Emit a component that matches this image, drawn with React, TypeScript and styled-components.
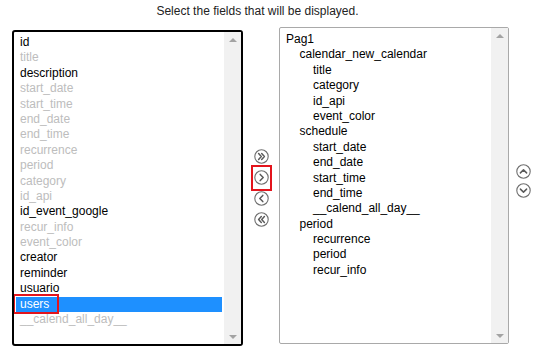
import React from "react";
import styled, { createGlobalStyle, css } from "styled-components";

const GlobalStyle = createGlobalStyle`
  html, body {
    margin: 0;
    padding: 0;
    background: #fff;
    font-family: "Liberation Sans", Arial, sans-serif;
    font-size: 12px;
  }
`;

type Field = { name: string; enabled: boolean; selected?: boolean; marked?: boolean };

const available: Field[] = [
  { name: "id", enabled: true },
  { name: "title", enabled: false },
  { name: "description", enabled: true },
  { name: "start_date", enabled: false },
  { name: "start_time", enabled: false },
  { name: "end_date", enabled: false },
  { name: "end_time", enabled: false },
  { name: "recurrence", enabled: false },
  { name: "period", enabled: false },
  { name: "category", enabled: false },
  { name: "id_api", enabled: false },
  { name: "id_event_google", enabled: true },
  { name: "recur_info", enabled: false },
  { name: "event_color", enabled: false },
  { name: "creator", enabled: true },
  { name: "reminder", enabled: true },
  { name: "usuario", enabled: true },
  { name: "users", enabled: true, selected: true, marked: true },
  { name: "__calend_all_day__", enabled: false },
];

const chosen: [string, number][] = [
  ["Pag1", 0],
  ["calendar_new_calendar", 1],
  ["title", 2],
  ["category", 2],
  ["id_api", 2],
  ["event_color", 2],
  ["schedule", 1],
  ["start_date", 2],
  ["end_date", 2],
  ["start_time", 2],
  ["end_time", 2],
  ["__calend_all_day__", 2],
  ["period", 1],
  ["recurrence", 2],
  ["period", 2],
  ["recur_info", 2],
];

const Page = styled.div`
  width: 546px;
  height: 346px;
  overflow: hidden;
`;

const Title = styled.div`
  height: 27px;
  box-sizing: border-box;
  padding: 4px 31px 0 0;
  line-height: 14px;
  text-align: center;
  color: #222;
`;

const Row = styled.div`
  display: flex;
  align-items: flex-start;
  padding-left: 12px;
`;

const ListBox = styled.div<{ $strong?: boolean }>`
  display: flex;
  box-sizing: border-box;
  background: #fff;
  ${(p) =>
    p.$strong
      ? css`
          width: 231px;
          height: 316px;
          margin-top: 3px;
          border: 2px solid #000;
          border-radius: 3px;
        `
      : css`
          width: 230px;
          height: 317px;
          margin-top: 0;
          border: 1px solid #a9a9a9;
          border-radius: 2px;
        `}
`;

const Items = styled.div<{ $top: number }>`
  flex: 1;
  padding: ${(p) => p.$top}px 2px 2px 2px;
  overflow: hidden;
`;

const Item = styled.div<{ $muted?: boolean; $selected?: boolean; $indent?: number }>`
  position: relative;
  height: 15.4px;
  line-height: 15.4px;
  padding-left: ${(p) => 4 + (p.$indent ?? 0) * 13.5}px;
  white-space: nowrap;
  color: ${(p) => (p.$selected ? "#fff" : p.$muted ? "#bdbdbd" : "#000")};
  background: ${(p) => (p.$selected ? "#1e90ff" : "transparent")};
`;

const Mark = styled.span`
  position: absolute;
  left: -3px;
  top: -3px;
  width: 46px;
  height: 20px;
  box-sizing: border-box;
  border: 2px solid #e3141c;
`;

const Track = styled.div`
  width: 17px;
  background: #f1f1f1;
  display: flex;
  flex-direction: column;
  justify-content: space-between;
  align-items: center;
  padding: 6px 0 5px;
  box-sizing: border-box;
`;

const Arrow = styled.span<{ $down?: boolean }>`
  width: 0;
  height: 0;
  border-left: 4px solid transparent;
  border-right: 4px solid transparent;
  ${(p) =>
    p.$down
      ? css`border-top: 4px solid #a3a3a3;`
      : css`border-bottom: 4px solid #a3a3a3;`}
`;

const ButtonColumn = styled.div<{ $right?: boolean }>`
  display: flex;
  flex-direction: column;
  justify-content: center;
  align-items: center;
  box-sizing: border-box;
  ${(p) =>
    p.$right
      ? css`
          width: 28px;
          height: 317px;
          padding-bottom: 9px;
        `
      : css`
          width: 36px;
          height: 316px;
          margin-top: 3px;
          padding-left: 1px;
        `}
`;

const IconButton = styled.div<{ $marked?: boolean; $tight?: boolean }>`
  position: relative;
  width: 21px;
  height: ${(p) => (p.$tight ? 19 : 21)}px;
  display: flex;
  align-items: center;
  justify-content: center;
  ${(p) =>
    p.$marked &&
    css`
      &::after {
        content: "";
        position: absolute;
        left: 0;
        top: -2px;
        width: 21px;
        height: 26px;
        box-sizing: border-box;
        border: 2px solid #e3141c;
      }
    `}
`;

type IconKind = "allRight" | "right" | "left" | "allLeft" | "up" | "down";

const chevrons: Record<IconKind, string> = {
  allRight: "M4.6 4.6 L7.3 7.5 L4.6 10.4 M7.7 4.6 L10.4 7.5 L7.7 10.4",
  right: "M6.2 4.4 L9.2 7.5 L6.2 10.6",
  left: "M8.8 4.4 L5.8 7.5 L8.8 10.6",
  allLeft: "M10.4 4.6 L7.7 7.5 L10.4 10.4 M7.3 4.6 L4.6 7.5 L7.3 10.4",
  up: "M4.4 8.9 L7.5 5.9 L10.6 8.9",
  down: "M4.4 6.1 L7.5 9.1 L10.6 6.1",
};

const CircleIcon: React.FC<{ kind: IconKind }> = ({ kind }) => (
  <svg width="15" height="15" viewBox="0 0 15 15">
    <circle cx="7.5" cy="7.5" r="6.7" fill="#fff" stroke="#6f6f6f" strokeWidth="1.1" />
    <path d={chevrons[kind]} fill="none" stroke="#5a5a5a" strokeWidth="1.5" strokeLinecap="round" strokeLinejoin="round" />
  </svg>
);

const Scrollbar = () => (
  <Track>
    <Arrow />
    <Arrow $down />
  </Track>
);

export default function App() {
  return (
    <Page>
      <GlobalStyle />
      <Title>Select the fields that will be displayed.</Title>
      <Row>
        <ListBox $strong>
          <Items $top={3}>
            {available.map((f) => (
              <Item key={f.name} $muted={!f.enabled} $selected={f.selected}>
                {f.marked && <Mark />}
                {f.name}
              </Item>
            ))}
          </Items>
          <Scrollbar />
        </ListBox>

        <ButtonColumn>
          <IconButton><CircleIcon kind="allRight" /></IconButton>
          <IconButton $marked><CircleIcon kind="right" /></IconButton>
          <IconButton><CircleIcon kind="left" /></IconButton>
          <IconButton><CircleIcon kind="allLeft" /></IconButton>
        </ButtonColumn>

        <ListBox>
          <Items $top={4}>
            {chosen.map(([label, level], i) => (
              <Item key={i} $indent={level}>
                {label}
              </Item>
            ))}
          </Items>
          <Scrollbar />
        </ListBox>

        <ButtonColumn $right>
          <IconButton $tight><CircleIcon kind="up" /></IconButton>
          <IconButton $tight><CircleIcon kind="down" /></IconButton>
        </ButtonColumn>
      </Row>
    </Page>
  );
}
